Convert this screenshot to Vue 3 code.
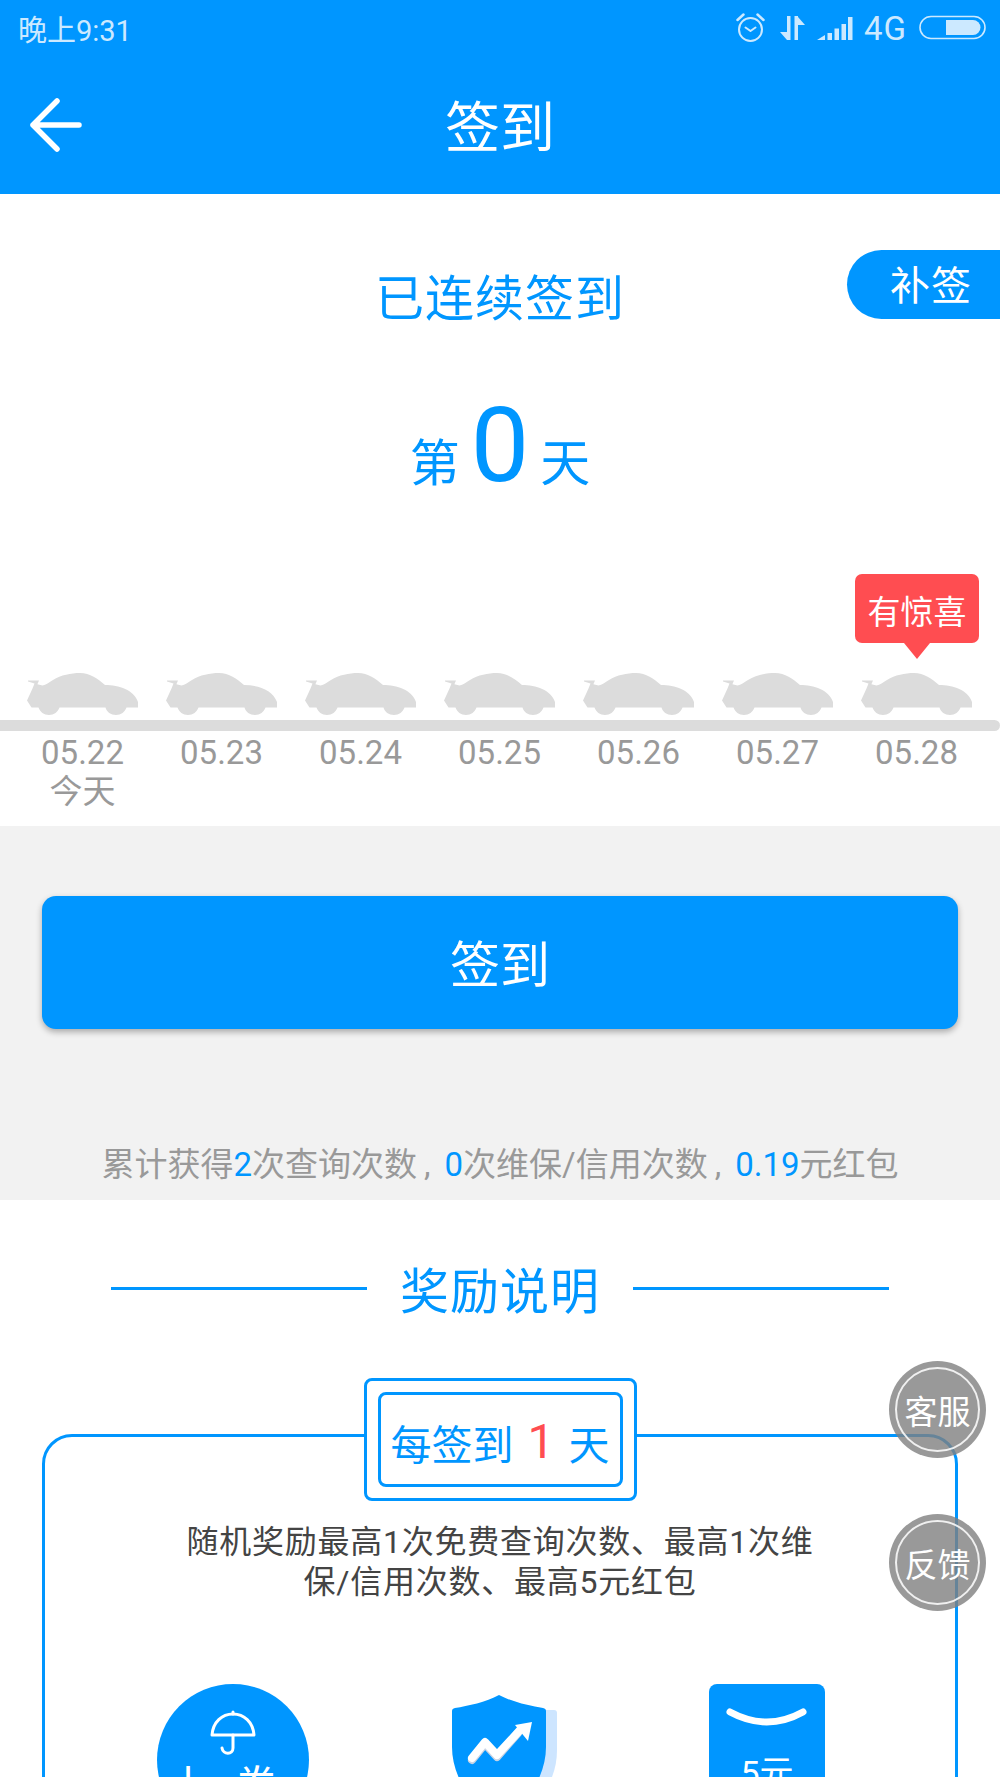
<template>
  <div class="page">
    <header class="head">
      <div class="status">
        <span class="clock">晚上9:31</span>
        <div class="status-icons">
          <svg class="ic-alarm" width="30" height="30" viewBox="0 0 30 30" fill="none" stroke="#cce9ff" stroke-width="2">
            <circle cx="14.5" cy="16.5" r="11.5" />
            <path d="M9.5 14.5 14.5 18 19.5 14.5" stroke-linecap="round" stroke-linejoin="round" />
            <path d="M1.5 7 7.5 1.5M27.5 7 21.5 1.5" stroke-width="2.5" stroke-linecap="round" />
          </svg>
          <svg class="ic-data" width="26" height="25" viewBox="0 0 26 25" fill="#cce9ff">
            <path d="M8 0h3.500v24H8zM1 16h7v8zM15.500 0H19v24h-3.500zM19 1l7 8h-7z" />
          </svg>
          <svg class="ic-signal" width="36" height="25" viewBox="0 0 36 25" fill="#cce9ff">
            <path d="M0 24 8 19v5zM10.500 17h4.500v7h-4.500zM17.500 12.500H22V24h-4.500zM24.500 8H29v16h-4.500zM31 1h4.500v23H31z" />
          </svg>
          <span class="net">4G</span>
          <svg class="ic-battery" width="68" height="26" viewBox="0 0 68 26">
            <rect x="1" y="1.500" width="65" height="22" rx="11" fill="none" stroke="#cce9ff" stroke-width="1.600" />
            <path d="M27 5h27a7.500 7.500 0 0 1 0 15H27z" fill="#cce9ff" />
          </svg>
        </div>
      </div>
      <nav class="nav">
        <svg class="back" width="54" height="54" viewBox="0 0 54 54" fill="none" stroke="#fff" stroke-width="5.500" stroke-linecap="round" stroke-linejoin="round">
          <path d="M29 3 5 27 29 51M5 27h46" />
        </svg>
        <h1 class="nav-title">签到</h1>
      </nav>
    </header>

    <section class="signin">
      <div class="retro">补签</div>
      <h2 class="streak">已连续签到</h2>
      <div class="count">
        <span>第</span>
        <strong>0</strong>
        <span>天</span>
      </div>
      <div class="cars">
        <div v-for="d in days" :key="d.date" class="car-cell">
          <div v-if="d.surprise" class="surprise">有惊喜</div>
          <svg width="112" height="42" viewBox="0 0 112 42">
            <path fill="#dcdcdc" d="M1 7.400H12L10.400 11.200 15.500 12.500C19 12 22 9.500 26 7 34 2 44 0 53 0 63 0 71 6 78 12 92 12 107 17 111 29V34.500H99.500C98 39 94 42 89 42 84 42 79.500 39 78.500 34.500H32.500C31 39 27 42 22 42 17 42 13 39 11.500 34.500H4.500L0 27.500 5.500 15.500 7.500 10.500 1 8.600Z" />
          </svg>
        </div>
      </div>
      <div class="track"></div>
      <div class="dates">
        <div v-for="d in days" :key="d.date" class="date">
          <span>{{ d.date }}</span>
          <span v-if="d.today" class="today">今天</span>
        </div>
      </div>
    </section>

    <section class="action">
      <button class="sign-btn">签到</button>
      <p class="total">累计获得<b>2</b>次查询次数<i>,</i><b>0</b>次维保/信用次数<i>,</i><b>0.19</b>元红包</p>
    </section>

    <section class="rewards">
      <div class="rewards-head">
        <span class="rule"></span>
        <h2>奖励说明</h2>
        <span class="rule"></span>
      </div>
      <div class="card">
        <div class="badge">
          <div class="badge-inner">每签到<em>1</em>天</div>
        </div>
        <p class="desc">随机奖励最高1次免费查询次数、最高1次维<br />保/信用次数、最高5元红包</p>
        <div class="prizes">
          <div class="prize">
            <div class="coin">
              <svg width="60" height="52" viewBox="0 0 60 52" fill="none" stroke="#fff" stroke-width="3">
                <path d="M9 27C10 14 19 6 30 6 41 6 50 14 51 27Z" stroke-linejoin="round" />
                <path d="M30 27V40C30 47 20 47 19 40M30 6V4" stroke-linecap="round" />
              </svg>
              <div class="coin-text"><span>上</span><span>券</span></div>
            </div>
          </div>
          <div class="prize">
            <svg class="shield" width="110" height="130" viewBox="0 0 110 130">
              <path fill="#cde5ff" d="M90 15H104Q107 15 107 18V55C107 85 90 110 60 130H50Z" />
              <path fill="#0096ff" d="M49 0C36 7 18 11 5 13Q2 13.500 2 16V52C2 80 20 110 49 130 78 110 96 80 96 52V16Q96 13.500 93 13C80 11 62 7 49 0Z" />
              <g fill="none" stroke-width="8" stroke-linecap="round" stroke-linejoin="round">
                <path d="M22 65 35 49 47 62 68 38" stroke="#c9d4e4" />
                <path d="M22 63 35 47 47 60 70 35" stroke="#fff" />
              </g>
              <path fill="#fff" d="M82 27 65 30 78 46Z" />
            </svg>
          </div>
          <div class="prize">
            <div class="packet">
              <svg width="116" height="69" viewBox="0 0 116 69" fill="none" stroke="#fff" stroke-width="7" stroke-linecap="round">
                <path d="M21 28Q58 48 94 28" />
              </svg>
              <span>5元</span>
            </div>
          </div>
        </div>
      </div>
    </section>

    <a class="float float-chat">客服</a>
    <a class="float float-feedback">反馈</a>
  </div>
</template>

<script setup>
const days = [
  { date: '05.22', today: true },
  { date: '05.23' },
  { date: '05.24' },
  { date: '05.25' },
  { date: '05.26' },
  { date: '05.27' },
  { date: '05.28', surprise: true }
]
</script>

<style scoped>
.page {
  position: relative;
  width: 1000px;
  height: 1777px;
  overflow: hidden;
  background: #fff;
  font-family: Roboto, "Noto Sans CJK SC", sans-serif;
}

/* header */
.head {
  height: 194px;
  background: #0096ff;
  color: #fff;
}

.status {
  height: 56px;
  display: flex;
  align-items: center;
  justify-content: space-between;
  padding: 0 13px 0 18px;
  color: #cce9ff;
}

.clock {
  font-size: 29px;
}

.status-icons {
  display: flex;
  align-items: center;
}

.ic-alarm {
  margin: 0 13px 0 0;
}

.ic-data {
  margin-right: 12px;
}

.ic-signal {
  margin-right: 11px;
}

.net {
  font-size: 33px;
  letter-spacing: 1px;
  margin-right: 12px;
}

.nav {
  height: 138px;
  display: flex;
  align-items: center;
  justify-content: center;
  position: relative;
}

.back {
  position: absolute;
  left: 28px;
  top: 42px;
}

.nav-title {
  margin: 0;
  padding-bottom: 4px;
  font-size: 55px;
  font-weight: 400;
}

/* sign in */
.signin {
  position: relative;
  height: 632px;
  padding-top: 76px;
  box-sizing: border-box;
}

.retro {
  position: absolute;
  right: 0;
  top: 56px;
  width: 110px;
  height: 69px;
  padding-left: 43px;
  line-height: 73px;
  font-size: 40px;
  letter-spacing: 1px;
  color: #fff;
  background: #0096ff;
  border-radius: 35px 0 0 35px;
}

.streak {
  margin: 0;
  text-align: center;
  font-size: 49px;
  line-height: 60px;
  font-weight: 400;
  color: #0096ff;
  letter-spacing: 1px;
}

.count {
  height: 120px;
  margin-top: 56px;
  display: flex;
  align-items: baseline;
  justify-content: center;
  gap: 11px;
  font-size: 50px;
  line-height: 120px;
  color: #0096ff;
}

.count strong {
  font-size: 104px;
  font-weight: 400;
}

.cars {
  display: grid;
  grid-template-columns: repeat(7, 139px);
  padding: 0 13px;
  margin-top: 167px;
}

.car-cell {
  position: relative;
  height: 42px;
  display: flex;
  justify-content: center;
}

.surprise {
  position: absolute;
  left: 8px;
  top: -99px;
  width: 124px;
  height: 61px;
  padding-top: 8px;
  line-height: 61px;
  text-align: center;
  font-size: 33px;
  color: #fff;
  background: #ff4d51;
  border-radius: 7px;
}

.surprise::after {
  content: "";
  position: absolute;
  left: 50%;
  top: 69px;
  margin-left: -13px;
  border: 13px solid transparent;
  border-top: 16px solid #ff4d51;
  border-bottom: 0;
}

.track {
  height: 11px;
  margin-top: 5px;
  background: #dcdcdc;
  border-radius: 0 6px 6px 0;
}

.dates {
  display: grid;
  grid-template-columns: repeat(7, 139px);
  padding: 0 13px;
  margin-top: 4px;
}

.date {
  display: flex;
  flex-direction: column;
  align-items: center;
  font-size: 33px;
  line-height: 36px;
  color: #999;
}

.today {
  font-size: 33px;
  line-height: 40px;
  margin-top: 1px;
}

/* button block */
.action {
  height: 374px;
  padding: 70px 42px 0;
  box-sizing: border-box;
  background: #f2f2f2;
}

.sign-btn {
  display: block;
  width: 100%;
  height: 133px;
  padding: 0 0 4px;
  border: 0;
  border-radius: 14px;
  background: #0096ff;
  box-shadow: 0 3px 6px rgba(0, 0, 0, 0.3);
  color: #fff;
  font-family: inherit;
  font-size: 50px;
}

.total {
  margin: 116px -42px 0;
  text-align: center;
  font-size: 33px;
  line-height: 40px;
  color: #999;
  white-space: nowrap;
}

.total b {
  font-weight: 400;
  color: #0096ff;
}

.total i {
  margin: 0 14px 0 7px;
  font-style: normal;
}

/* rewards */
.rewards {
  padding-top: 63px;
}

.rewards-head {
  display: flex;
  align-items: center;
  justify-content: center;
  gap: 33px;
}

.rewards-head h2 {
  margin: 0;
  font-size: 49px;
  line-height: 60px;
  font-weight: 400;
  letter-spacing: 1px;
  color: #0096ff;
}

.rule {
  width: 256px;
  height: 3px;
  margin-top: -10px;
  background: #0096ff;
}

.card {
  margin: 111px 42px 0;
  height: 600px;
  border: 3px solid #0096ff;
  border-radius: 30px;
}

.badge {
  width: 273px;
  height: 123px;
  margin: -59px auto 0;
  padding: 11px;
  box-sizing: border-box;
  border: 3px solid #0096ff;
  border-radius: 8px;
  background: #fff;
}

.badge-inner {
  height: 100%;
  display: flex;
  align-items: center;
  justify-content: center;
  padding-top: 4px;
  box-sizing: border-box;
  border: 3px solid #0096ff;
  border-radius: 8px;
  font-size: 41px;
  color: #0096ff;
}

.badge-inner em {
  margin: 0 14px 0 14px;
  font-style: normal;
  font-size: 48px;
  color: #ff4d51;
}

.desc {
  margin: 21px 0 0;
  text-align: center;
  font-size: 32px;
  line-height: 40px;
  letter-spacing: 0.75px;
  color: #444;
}

.prizes {
  display: grid;
  grid-template-columns: repeat(3, 267px);
  justify-content: center;
  margin-top: 82px;
}

.prize {
  display: flex;
  justify-content: center;
}

.coin {
  width: 152px;
  height: 152px;
  padding-top: 24px;
  box-sizing: border-box;
  border-radius: 50%;
  background: #0096ff;
  display: flex;
  flex-direction: column;
  align-items: center;
}

.coin-text {
  display: flex;
  gap: 23px;
  margin-top: 6px;
  font-size: 44px;
  line-height: 44px;
  color: #fff;
  transform: translateX(-10px);
}

.shield {
  margin: 11px 0 0 10px;
}

.packet {
  width: 116px;
  height: 160px;
  border-radius: 8px;
  background: #0096ff;
  color: #fff;
  font-size: 34px;
  line-height: 40px;
  text-align: center;
}

.packet svg {
  display: block;
}

/* floating buttons */
.float {
  position: absolute;
  left: 889px;
  width: 97px;
  height: 97px;
  display: flex;
  align-items: center;
  justify-content: center;
  border-radius: 50%;
  background: rgba(128, 128, 128, 0.8);
  color: #fff;
  font-size: 33px;
}

.float::before {
  content: "";
  position: absolute;
  inset: 6px;
  border: 2px solid rgba(255, 255, 255, 0.85);
  border-radius: 50%;
}

.float-chat {
  top: 1361px;
}

.float-feedback {
  top: 1514px;
}
</style>

<style>
html,
body {
  margin: 0;
  background: #fff;
}
</style>
